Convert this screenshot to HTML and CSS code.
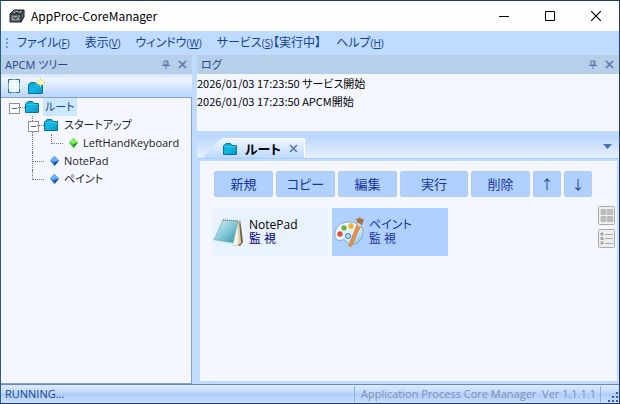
FILE: index.html
```html
<!DOCTYPE html>
<html lang="ja">
<head>
<meta charset="utf-8">
<title>AppProc-CoreManager</title>
<link rel="stylesheet" href="styles.css">
</head>
<body>
<svg class="defs" aria-hidden="true">
  <defs>
    <linearGradient id="folderFill" x1="0" y1="0" x2="1" y2="1"><stop offset="0" stop-color="#08a4d0"/><stop offset=".45" stop-color="#12b8e2"/><stop offset="1" stop-color="#0796c4"/></linearGradient>
    <linearGradient id="padFill" x1="0" y1="0" x2="1" y2="1"><stop offset="0" stop-color="#e4f6f9"/><stop offset=".5" stop-color="#86cbd8"/><stop offset="1" stop-color="#338fa6"/></linearGradient>
    <linearGradient id="paletteFill" x1="0" y1="0" x2="1" y2="1"><stop offset="0" stop-color="#fff"/><stop offset=".6" stop-color="#d9eef9"/><stop offset="1" stop-color="#76b4d8"/></linearGradient>
    <symbol id="folder" viewBox="0 0 14 12"><path d="M.5 3 3 .5h4.500L9 2.500h4.500v9H.5z" fill="url(#folderFill)" stroke="#0b7299"/><path d="M1 3.500h12" stroke="#35cdee"/></symbol>
    <symbol id="pin" viewBox="0 0 8 9"><path d="M2 1h4v4H2zM5 1v4M0 5.500h8M4 6v3" fill="none" stroke="#5877ad"/></symbol>
    <symbol id="cross" viewBox="0 0 9 9"><path d="m1 1 7 7M8 1 1 8" fill="none" stroke="#5c7bae" stroke-width="1.700"/></symbol>
    <symbol id="gemBlue" viewBox="0 0 9 10"><path d="M4.500 0 9 4.500 4.500 10 0 4.500z" fill="#2b6fe0"/><path d="M4.500 0 9 4.500 4.500 6 0 4.500z" fill="#69aeff"/><path d="M4.500 6 9 4.500 4.500 10z" fill="#174cba"/></symbol>
    <symbol id="gemGreen" viewBox="0 0 9 10"><path d="M4.500 0 9 4.500 4.500 10 0 4.500z" fill="#35c42b"/><path d="M4.500 0 9 4.500 4.500 6 0 4.500z" fill="#82f05c"/><path d="M4.500 6 9 4.500 4.500 10z" fill="#1b9c20"/></symbol>
  </defs>
</svg>
<div class="window">
  <header class="titlebar">
    <svg class="app-icon" viewBox="0 0 16 14"><path d="m1 5 4-4h10v7l-3 5H1z" fill="#5d686d" stroke="#15191b"/><path d="M1 5h11l3-4M12 5v8" fill="none" stroke="#15191b"/><path d="m4 4 2-2h7l-2 2z" fill="#a9b6b8"/><path d="M3 7h7v4H3z" fill="#8e9c9e"/><path d="m4 8 2 2 3-2M6 3l2 1 3-2" fill="none" stroke="#15191b"/></svg>
    <h1>AppProc-CoreManager</h1>
    <div class="caption">
      <button aria-label="最小化"><svg viewBox="0 0 10 10"><path d="M0 5.500h10" stroke="#000"/></svg></button>
      <button aria-label="最大化"><svg viewBox="0 0 10 10"><path d="M.5.5h9v9h-9z" fill="none" stroke="#000"/></svg></button>
      <button aria-label="閉じる"><svg viewBox="0 0 10 10"><path d="m0 0 10 10M10 0 0 10" stroke="#000" stroke-width="1.200"/></svg></button>
    </div>
  </header>
  <nav class="menu">
    <span class="grip"></span>
    <button>ファイル<small>(<u>F</u>)</small></button>
    <button>表示<small>(<u>V</u>)</small></button>
    <button>ウィンドウ<small>(<u>W</u>)</small></button>
    <button>サービス<small>(<u>S</u>)</small>【実行中】</button>
    <button>ヘルプ<small>(<u>H</u>)</small></button>
  </nav>
  <div class="workspace">
    <aside class="dock">
      <div class="dock-head"><h2>APCM ツリー</h2>
        <button aria-label="固定"><svg class="pin"><use href="#pin"/></svg></button>
        <button aria-label="閉じる"><svg class="cross"><use href="#cross"/></svg></button>
      </div>
      <div class="tools">
        <button aria-label="全体表示"><svg class="sheet" viewBox="0 0 12 14"><path d="M1 1h10v12H1z" fill="#f0fafa"/><path d="M.5 4V.5H4M8 .5h3.500V4M11.500 10v3.500H8M4 13.500H.5V10" fill="none" stroke="#26737b"/><path d="M4 .5h4M.5 4v6M11.500 4v6M4 13.500h4" stroke="#6fabb3"/><path d="m1 1 3 3M11 1 8 4M1 13l3-3M11 13l-3-3" stroke="#c9ecdf"/></svg></button>
        <button aria-label="新しいフォルダー"><svg class="new-folder" viewBox="0 0 17 16"><path d="M.5 6.500 3 4.500h4l2 2h5.500v9H.5z" fill="url(#folderFill)" stroke="#0b7299"/><path d="M12.500 0v9M8 4.500h9M9.500 1.500l6 6M15.500 1.500l-6 6" stroke="#f3cf62"/><circle cx="12.500" cy="4.500" r="2.500" fill="#fff3a5"/></svg></button>
      </div>
      <ul class="tree">
        <li><button class="node toggle" aria-label="折りたたむ"></button><svg class="folder"><use href="#folder"/></svg><span class="label selected">ルート</span></li>
        <li><i class="node"></i><button class="node toggle trunk" aria-label="折りたたむ"></button><svg class="folder"><use href="#folder"/></svg><span class="label">スタートアップ</span></li>
        <li><i class="node"></i><i class="node line"></i><i class="node line elbow"></i><svg class="gem"><use href="#gemGreen"/></svg><span class="label">LeftHandKeyboard</span></li>
        <li><i class="node"></i><i class="node line tee"></i><svg class="gem"><use href="#gemBlue"/></svg><span class="label">NotePad</span></li>
        <li><i class="node"></i><i class="node line elbow"></i><svg class="gem"><use href="#gemBlue"/></svg><span class="label">ペイント</span></li>
      </ul>
    </aside>
    <main class="content">
      <section class="log">
        <div class="dock-head"><h2>ログ</h2>
          <button aria-label="固定"><svg class="pin"><use href="#pin"/></svg></button>
          <button aria-label="閉じる"><svg class="cross"><use href="#cross"/></svg></button>
        </div>
        <div class="log-lines"><p>2026/01/03 17:23:50 サービス開始</p><p>2026/01/03 17:23:50 APCM開始</p></div>
      </section>
      <section class="document">
        <div class="tabs">
          <div class="tab"><svg class="folder"><use href="#folder"/></svg><strong>ルート</strong><button aria-label="閉じる"><svg class="cross"><use href="#cross"/></svg></button></div>
          <button class="tab-list" aria-label="タブ一覧"><svg viewBox="0 0 9 5"><path d="M0 0h9L4.500 5z" fill="#4a6fae"/></svg></button>
        </div>
        <div class="page">
          <div class="page-main">
            <div class="actions"><button>新規</button><button>コピー</button><button>編集</button><button class="wide">実行</button><button>削除</button><button class="arrow">↑</button><button class="arrow">↓</button></div>
            <div class="cards">
              <div class="card">
                <svg viewBox="0 0 32 32"><path d="m27 3 3 23-3 4-5-2z" fill="#6d5a3f"/><path d="m26 4 2 23-4 3-3-6z" fill="#e9d9a9"/><path d="m25 5 1 22-4 3-6-4z" fill="#f8f6eb" stroke="#a9aaa0" stroke-width=".5"/><path d="M10 4 25 5 20 27 1 24z" fill="url(#padFill)" stroke="#5aa0ae" stroke-width=".6"/><path d="m1 24 19 3-1 2L2 25z" fill="#d6ecee"/><path d="m10 4 15 1" stroke="#7d8f93" stroke-width="1.500" stroke-dasharray="1 1"/></svg>
                <div><b>NotePad</b><span>監 視</span></div>
              </div>
              <div class="card active">
                <svg viewBox="0 0 32 32"><path d="M16 6C7 6 1 12 2 20c1 5 5 5 7 4 3-1 4 1 5 3 3 4 15 0 16-9C31 11 25 6 16 6z" fill="url(#paletteFill)" stroke="#6fa0bf" stroke-width=".8"/><circle cx="11" cy="12" r="2.700" fill="#65b84b"/><circle cx="18" cy="10" r="2.700" fill="#f1b52c"/><circle cx="7" cy="18" r="2.700" fill="#d95245"/><circle cx="15" cy="20" r="2.500" fill="#b9dcf5" stroke="#4289c4"/><path d="m24 9 3 2-8 18c-1 2-3 2-3 0z" fill="#ed9143" stroke="#bd6326" stroke-width=".6"/><path d="m23 8 2-2 4 3-2 3z" fill="#d4d7d8" stroke="#85745e" stroke-width=".5"/><path d="m24 6-1-4 2 1 2-2 1 2h3l-2 6z" fill="#a9733e"/></svg>
                <div><b>ペイント</b><span>監 視</span></div>
              </div>
            </div>
          </div>
          <div class="views">
            <button aria-label="タイル表示"><svg viewBox="0 0 17 19"><rect x=".5" y=".5" width="16" height="18" rx="1" fill="#eee" stroke="#aaa"/><path d="M3 3.500h5v5H3zM9.500 3.500h5v5h-5zM3 10.500h5v5H3zM9.500 10.500h5v5h-5z" fill="#bdbdbd" stroke="#aaa" stroke-width=".6"/></svg></button>
            <button aria-label="一覧表示"><svg viewBox="0 0 17 19"><rect x=".5" y=".5" width="16" height="18" rx="1" fill="#eee" stroke="#aaa"/><path d="M3 4h2v2H3zM3 8.500h2v2H3zM3 13h2v2H3z" fill="#ccc" stroke="#999"/><path d="M7 5.500h8M7 9.500h8M7 14.500h8" stroke="#aaa"/></svg></button>
          </div>
        </div>
      </section>
    </main>
  </div>
  <footer class="status"><span>RUNNING...</span><span class="version">Application Process Core Manager&nbsp; Ver 1.1.1.1</span><svg class="resize" viewBox="0 0 11 11"><path d="M8 0h2v2H8zM4 4h2v2H4zM8 4h2v2H8zM0 8h2v2H0zM4 8h2v2H4zM8 8h2v2H8z" fill="#3a5e9c"/></svg></footer>
</div>
</body>
</html>
```
FILE: styles.css
```css
* { box-sizing: border-box; }
body {
  margin: 0;
  font-family: "Open Sans", "Noto Sans CJK JP", sans-serif;
  font-size: 12px;
  font-feature-settings: "palt";
  color: #1e395b;
}
button { margin: 0; padding: 0; border: 0; background: none; font: inherit; font-feature-settings: inherit; color: inherit; }
h1, h2, p, ul { margin: 0; padding: 0; font-size: 12px; font-weight: 400; }
svg { display: block; flex: none; }
.defs { position: absolute; width: 0; height: 0; }
.window {
  display: flex;
  flex-direction: column;
  min-height: 100vh;
  border: 1px solid #243b5e;
  border-left-color: #315c78;
  background: #bfdbff;
}

.titlebar { display: flex; align-items: center; height: 30px; padding-left: 8px; background: #fff; color: #000; }
.titlebar h1 { font-family: "Noto Sans CJK JP", sans-serif; line-height: 30px; }
.app-icon { width: 16px; height: 14px; margin-right: 6px; }
.caption { display: flex; margin-left: auto; }
.caption button { display: grid; place-items: center; width: 46px; height: 30px; }
.caption svg { width: 10px; height: 10px; }

.menu { display: flex; align-items: center; gap: 15px; height: 24px; padding-left: 5px; color: #15428b; white-space: nowrap; }
.menu button { line-height: 20px; }
.menu small { font-size: 10px; }
.grip { width: 2px; height: 11px; margin-right: -6px; background: repeating-linear-gradient(#6f9dd9 0 2px, transparent 2px 4px); }

.workspace { display: grid; grid-template-columns: 191px minmax(0, 1fr); column-gap: 5px; flex: 1; }
.dock, .content, .document { display: flex; flex-direction: column; }
.dock-head { display: flex; align-items: center; gap: 8px; height: 19px; padding: 0 5px 0 4px; background: #b7cfe9; color: #20478b; }
.dock-head h2 { flex: 1; font-size: 11px; line-height: 18px; }
.pin { width: 8px; height: 9px; }
.cross { width: 9px; height: 9px; }
.tools { display: flex; align-items: center; gap: 8px; height: 23px; padding: 0 7px; background: linear-gradient(#d3e5ff, #eef5ff 20%, #b9d6fd); }
.sheet { width: 12px; height: 14px; }
.new-folder { width: 17px; height: 16px; }

.tree { flex: 1; border: 1px solid #8ba0bc; border-left: 0; background: #f4f7ff; padding-left: 3px; list-style: none; color: #1b1b1b; font-size: 11px; }
.tree li { display: flex; align-items: center; height: 18px; }
.node { position: relative; flex: none; width: 19px; height: 18px; }
.node::before, .node::after { content: ""; position: absolute; }
.line::before { left: 9px; top: 0; bottom: 0; border-left: 1px dotted #777; }
.elbow::before { bottom: 8px; }
.elbow::after, .tee::after { left: 9px; right: -2px; top: 9px; border-top: 1px dotted #777; }
.toggle::before {
  left: 5px; top: 5px; width: 9px; height: 9px;
  border: 1px solid #919191;
  background: linear-gradient(#4965a0, #4965a0) center / 5px 1px no-repeat #fff;
}
.toggle::after { left: 14px; right: -2px; top: 9px; border-top: 1px dotted #777; }
.trunk { background: repeating-linear-gradient(#777 0 1px, transparent 1px 2px) 9px 0 / 1px 18px no-repeat; }
.folder { width: 14px; height: 12px; }
.tree .folder { margin: 0 4px 0 2px; }
.gem { width: 9px; height: 10px; margin: 0 3px 0 8px; }
.label { padding: 0 2px; line-height: 18px; }
.selected { background: #cce8ff; color: #15428b; }

.log-lines { min-height: 57px; background: #f4f7ff; color: #000; font-family: "Noto Sans CJK JP", sans-serif; }
.log-lines p { font-size: 11px; line-height: 18px; }
.document { flex: 1; margin-top: 4px; }
.tabs { display: flex; align-items: flex-end; justify-content: space-between; height: 24px; padding-left: 6px; background: linear-gradient(#b9d6ff, #e7f0ff); border-bottom: 1px solid #a9cfff; }
.tab { display: flex; align-items: center; height: 20px; padding: 0 6px 0 20px; background: linear-gradient(#edf5ff, #bddaff); border-top: 1px solid #fff; border-right: 1px solid #fff; clip-path: polygon(0 100%, 14px 4px, 20px 0, 100% 0, 100% 100%); color: #000; }
.tab strong { margin: 0 8px; font-size: 13px; line-height: 18px; }
.tab-list { align-self: center; margin-right: 7px; }
.tab-list svg { width: 9px; height: 5px; }
.page { display: flex; flex: 1; justify-content: space-between; padding: 10px 2px 0 12px; background: #f4f7ff; border: solid #bfdbff; border-width: 2px 2px 3px 3px; }
.actions { display: flex; gap: 3px; padding-left: 2px; color: #15359b; }
.actions button { width: 59px; height: 26px; border: 1px solid #b7cceb; border-radius: 2px; background: #b0d0ff; font-family: "Noto Sans CJK JP", sans-serif; font-size: 13px; line-height: 20px; }
.actions .wide { width: 68px; }
.actions .arrow { width: 28px; }
.cards { display: flex; gap: 4px; margin-top: 11px; }
.card { display: flex; align-items: center; gap: 4px; width: 116px; height: 48px; padding-left: 1px; background: #e9f2ff; color: #000080; }
.card svg { width: 32px; height: 32px; }
.card b, .card span { display: block; font-weight: 400; font-size: 12px; line-height: 14px; }
.card b { color: #000; }
.active { background: #b0d0ff; }
.active b, .active span { color: #15359b; }
.views { display: flex; flex-direction: column; gap: 4px; padding-top: 35px; }
.views svg { width: 17px; height: 19px; }

.status { display: flex; align-items: center; height: 19px; padding-left: 4px; border-top: 1px solid #6889b8; background: linear-gradient(#dceaff, #c3dcff 40%, #acceFA 50%, #c8deff); color: #15428b; font-size: 11px; line-height: 18px; white-space: nowrap; }
.version { margin-left: auto; padding: 0 4px 0 6px; border: solid #8daed9; border-width: 0 1px; color: #8190ad; line-height: 16px; }
.resize { width: 11px; height: 11px; align-self: flex-end; margin-left: 7px; }
```
